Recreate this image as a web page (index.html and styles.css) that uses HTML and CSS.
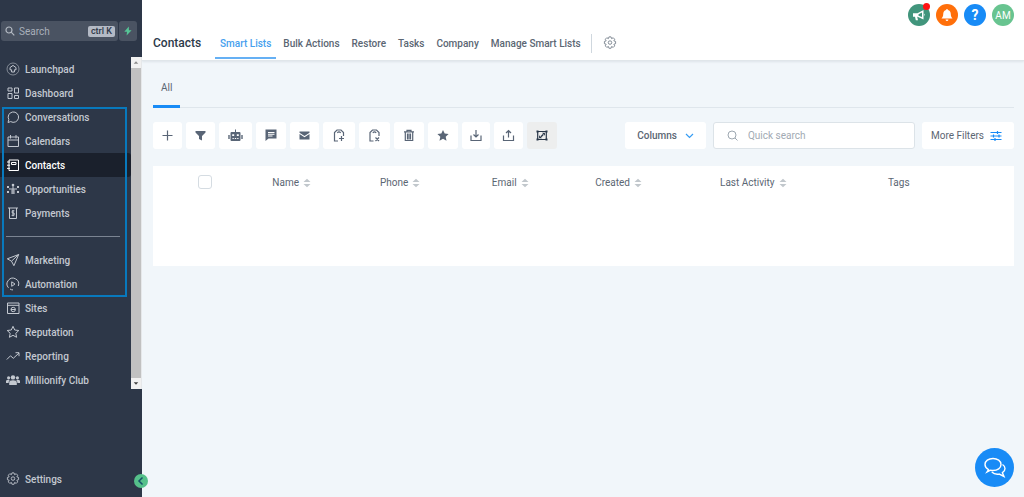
FILE: index.html
```html
<!DOCTYPE html>
<html lang="en">
<head>
<meta charset="utf-8">
<title>Contacts</title>
<meta name="viewport" content="width=device-width, initial-scale=1">
<link rel="stylesheet" href="styles.css">
</head>
<body>
<div class="app">
  <aside class="sidebar">
    <div class="finder">
      <label class="finder-box">
        <svg width="10" height="10" viewBox="0 0 10 10"><circle cx="4" cy="4" r="3"/><path d="M6.2 6.2 9.3 9.3"/></svg>
        <input type="search" placeholder="Search" aria-label="Search">
        <kbd>ctrl K</kbd>
      </label>
      <button class="bolt" aria-label="Quick actions"><svg width="8" height="10" viewBox="0 0 8 10"><path d="M4.8.6.3 5.800h2.700l-.4 3.800 5-5.400H4.900z"/></svg></button>
    </div>
    <div class="menu-area">
      <nav class="menu">
        <a href="#"><svg viewBox="0 0 14 14"><circle cx="7" cy="7" r="6" opacity=".55"/><path d="M5.6 10V7.8H4V5.6L7 3.4l3 2.2v2.2H8.4V10z"/></svg>Launchpad</a>
        <a href="#"><svg viewBox="0 0 14 14"><path d="M2 2h4v3H2zM8.500 2h4v5h-4zM2 7.500h4v5H2zM8.500 9.500h4v3h-4z"/></svg>Dashboard</a>
        <a href="#"><svg viewBox="0 0 14 14"><path d="M2 12.500 2.800 9.600A5.200 5.200 0 1 1 4.700 11.600z"/></svg>Conversations</a>
        <a href="#"><svg viewBox="0 0 14 14"><path d="M2 3h10.500v9.500H2zM2 6h10.500M4.500 1v3.500M10 1v3.500"/></svg>Calendars</a>
        <a href="#" class="current" aria-current="page"><svg viewBox="0 0 14 14"><path d="M3 2h9.500v10.500H3zM5.500 4.500h4.500v2H5.500zM1 4h3M1 7.200h3M1 10.400h3"/></svg>Contacts</a>
        <a href="#"><svg viewBox="0 0 14 14"><circle class="solid" cx="7" cy="3" r="1.300"/><path d="M7 4v8M4 7h6M6 7.500V12M8 7.500V12"/><path class="solid" d="M1 4h2v2H1zM1 9h2v2H1zM11 4h2v2h-2zM11 9h2v2h-2zM3 6.500h1v1H3zM10 6.500h1v1h-1z"/></svg>Opportunities</a>
        <a href="#"><svg viewBox="0 0 14 14"><path d="M2 2h10M3.500 2v10.500h7V2M8.400 4.800H6.200V7h1.900v2.300H5.600M7 4v6.300"/></svg>Payments</a>
        <hr>
        <a href="#"><svg viewBox="0 0 14 14"><path d="M12.700 1.500 1.300 5.800l4.200 2.400 2.400 4.500zM12.700 1.500 5.500 8.200"/></svg>Marketing</a>
        <a href="#"><svg viewBox="0 0 14 14"><path d="M2.500 10.800A5.800 5.800 0 1 1 12.300 9M4 12c1 .7 1.900.9 3 .9M5.700 4.800v4.500L9 7z"/></svg>Automation</a>
        <a href="#"><svg viewBox="0 0 14 14"><path d="M1.500 2h11.500v10.500H1.500zM1.500 4.300H13"/><circle cx="7.200" cy="8.500" r="2.200"/><path d="M5 8.500h4.400"/></svg>Sites</a>
        <a href="#"><svg viewBox="0 0 14 14"><path d="m7 1.300 1.700 3.700 4.100.5-3 2.800.8 4L7 10.300l-3.600 2 .8-4-3-2.800 4.100-.5z"/></svg>Reputation</a>
        <a href="#"><svg viewBox="0 0 14 14"><path d="m.8 10.500 3.700-3.700 2.800 2.500L13 4M9.500 3.700H13v3.500"/></svg>Reporting</a>
        <a href="#"><svg viewBox="0 0 14 14"><g class="solid"><circle cx="7" cy="4.400" r="2.200"/><circle cx="2.600" cy="4.800" r="1.600"/><circle cx="11.400" cy="4.800" r="1.600"/><path d="M3.200 12V9.300Q3.200 7.200 7 7.200t3.800 2.100V12zM0 10V7.800Q.7 6.500 3.800 6.900 2.600 7.800 2.600 10zM14 10V7.800q-.7-1.300-3.800-.9 1.200.9 1.200 3.100z"/></g></svg>Millionify Club</a>
        <div class="focus-frame"></div>
      </nav>
      <div class="scrollbar" aria-hidden="true">
        <svg viewBox="0 0 11 11"><path d="m3 7 2.500-3L8 7z"/></svg>
        <div class="thumb"></div>
        <svg class="down" viewBox="0 0 11 11"><path d="m3 4 2.500 3L8 4z"/></svg>
      </div>
    </div>
    <div class="menu settings">
      <a href="#"><svg viewBox="0 0 16 16"><path d="M6.800 1h2.400l.6 2 1.900-1 1.700 1.700-1 1.900 2 .6v2.600l-2 .6 1 1.900-1.700 1.700-1.900-1-.6 2H6.800l-.6-2-1.900 1-1.700-1.700 1-1.900-2-.6V6.200l2-.6-1-1.900L4.300 2l1.900 1z"/><circle cx="8" cy="7.500" r="2"/></svg>Settings</a>
    </div>
    <button class="collapse" aria-label="Collapse sidebar"><svg width="8" height="10" viewBox="0 0 8 10"><path d="M5.500 1.500 2 5l3.500 3.500"/></svg></button>
  </aside>

  <div class="page">
    <header class="header">
      <div class="account">
        <button class="round news" aria-label="News"><svg width="14" height="14" viewBox="0 0 14 14"><path d="M1 5.200h4.500L11.500 2v9.500L5.500 8.800h-.3l.8 3.400H3.800L3 8.800H1z"/><path class="hole" d="m6.500 6.200 3.500-1.800v4.700L6.500 7.700z"/><path d="M12 5.500q1.500 1.300 0 2.600z"/></svg><span class="alert"></span></button>
        <button class="round bell" aria-label="Notifications"><svg width="14" height="14" viewBox="0 0 14 14"><path d="M7 1q.9 0 .9 1c2 .6 2.900 2 2.900 4.200 0 2 .5 2.900 1.700 4.300H1.500c1.200-1.400 1.700-2.300 1.700-4.300C3.200 4 4.100 2.600 6.100 2q0-1 .9-1zM5.500 11.500h3q-.3 1.500-1.500 1.500t-1.500-1.500z"/></svg></button>
        <button class="round help">?</button>
        <button class="round avatar">AM</button>
      </div>
      <div class="nav-row">
        <h1>Contacts</h1>
        <nav class="tabs">
          <a href="#" class="on">Smart Lists</a>
          <a href="#">Bulk Actions</a>
          <a href="#">Restore</a>
          <a href="#">Tasks</a>
          <a href="#">Company</a>
          <a href="#">Manage Smart Lists</a>
        </nav>
        <button class="gear" aria-label="Contact settings"><svg width="14" height="14" viewBox="0 0 16 16"><path d="M6.800 1h2.400l.6 2 1.900-1 1.700 1.700-1 1.900 2 .6v2.600l-2 .6 1 1.900-1.700 1.700-1.900-1-.6 2H6.800l-.6-2-1.900 1-1.700-1.700 1-1.900-2-.6V6.200l2-.6-1-1.900L4.300 2l1.900 1z"/><circle cx="8" cy="7.500" r="2"/></svg></button>
      </div>
    </header>

    <main class="content">
      <nav class="lists"><a href="#">All</a></nav>

      <div class="toolbar">
        <button class="tool" aria-label="Add contact"><svg width="13" height="14" viewBox="0 0 13 14"><path class="line" d="M6.500 1.500v10M1.500 6.500h10"/></svg></button>
        <button class="tool" aria-label="Filter"><svg width="13" height="14" viewBox="0 0 13 14"><path d="M1.500 2h10v1.500L8 7v4.500L5 10V7L1.500 3.500z"/></svg></button>
        <button class="tool" aria-label="Automation"><svg width="17" height="14" viewBox="0 0 17 14"><path fill-rule="evenodd" d="M8 .5h1V3h3.500q1 0 1 1v7q0 1-1 1h-8q-1 0-1-1V4q0-1 1-1H8zM5.200 5.300V7h2V5.300zm4.600 0V7h2V5.300zM5.500 9v1h1.300V9zm2.300 0v1h1.400V9zm2.400 0v1h1.300V9zM1.300 6h1.400v4H1.300zm13 0h1.400v4h-1.400z"/></svg></button>
        <button class="tool" aria-label="Send message"><svg width="14" height="14" viewBox="0 0 14 14"><path fill-rule="evenodd" d="M1.500.500h11v9h-8l-3 2.500zM4 3v1h6.500V3zM4 4.800v1h6.500v-1zM4 6.600v1h4.500v-1z"/></svg></button>
        <button class="tool" aria-label="Send email"><svg width="13" height="14" viewBox="0 0 13 14"><path d="M1.500 2.500h10v1.200L6.500 7l-5-3.300zM1.500 5l5 3.200 5-3.200v5.500h-10z"/></svg></button>
        <button class="tool" aria-label="Add tag"><svg width="16" height="14" viewBox="0 0 16 14"><path class="line" d="M7 12H3.500V3.500L6 1h4l2.500 2.500V7M6.300 3.800q1.700-2 3.400 0M10.500 7v5M8 9.500h5"/></svg></button>
        <button class="tool" aria-label="Remove tag"><svg width="15" height="14" viewBox="0 0 15 14"><path class="line" d="M6.500 12H3V3.500L5.500 1h4L12 3.500V7M5.800 3.800q1.700-2 3.400 0M8.500 8.500 12 12M12 8.500 8.500 12"/></svg></button>
        <button class="tool" aria-label="Delete"><svg width="14" height="14" viewBox="0 0 14 14"><path class="line" d="M2 2.800h10M5 2.500V1.300h4v1.200M3.300 3v8.500h7.400V3M5.500 4.500v6M7 4.500v6M8.500 4.500v6"/></svg></button>
        <button class="tool" aria-label="Request review"><svg width="14" height="14" viewBox="0 0 14 14"><path d="m7 1 1.700 3.600 3.900.5-2.900 2.700.8 3.900L7 9.800l-3.500 1.900.8-3.900-2.900-2.700 3.900-.5z"/></svg></button>
        <button class="tool" aria-label="Import"><svg width="12" height="14" viewBox="0 0 12 14"><path class="line" d="M1 6.500v5h10v-5M6 1v6.800M3.500 5.500 6 8l2.500-2.500"/></svg></button>
        <button class="tool" aria-label="Export"><svg width="13" height="14" viewBox="0 0 13 14"><path class="line" d="M1.500 6.500v5h10v-5M6.500 8.500V1.700M4 4l2.500-2.500L9 4"/></svg></button>
        <button class="tool merge" aria-label="Merge"><svg width="14" height="14" viewBox="0 0 14 14"><path class="line" d="M2.700 2.500h8.600v8H2.700z"/><path d="M7 3.800h2.900v2.900zM4.100 6.300 7 9.200H4.100zM5.500 7.200l2.200-2.200 1 1-2.200 2.200zM1.500 1.500h2v2h-2zM10.500 1.500h2v2h-2zM1.500 9.500h2v2h-2zM10.500 9.500h2v2h-2z"/></svg></button>
        <div class="toolbar-end">
          <button class="columns">Columns<svg width="9" height="6" viewBox="0 0 9 6"><path d="m1 1 3.500 3.500L8 1"/></svg></button>
          <label class="quick">
            <svg width="11" height="11" viewBox="0 0 11 11"><circle cx="5" cy="5" r="4"/><path d="m8 8 2.500 2.500"/></svg>
            <input type="search" placeholder="Quick search" aria-label="Quick search">
          </label>
          <button class="more">More Filters<svg width="12" height="12" viewBox="0 0 12 12"><path d="M.5 2.500h11M.5 6h11M.5 9.500h11M7.500 1v3M9 4.500v3M3.500 4.500v3M5 8v3"/></svg></button>
        </div>
      </div>

      <div class="card">
        <table class="contacts">
          <thead>
            <tr>
              <th class="check"><input type="checkbox" aria-label="Select all contacts"></th>
              <th class="name">Name<svg viewBox="0 0 8 10"><path d="M.5 4 4 .8 7.500 4zM.5 6 4 9.200 7.500 6z"/></svg></th>
              <th class="phone">Phone<svg viewBox="0 0 8 10"><path d="M.5 4 4 .8 7.500 4zM.5 6 4 9.200 7.500 6z"/></svg></th>
              <th class="email">Email<svg viewBox="0 0 8 10"><path d="M.5 4 4 .8 7.500 4zM.5 6 4 9.200 7.500 6z"/></svg></th>
              <th class="created">Created<svg viewBox="0 0 8 10"><path d="M.5 4 4 .8 7.500 4zM.5 6 4 9.200 7.500 6z"/></svg></th>
              <th class="activity">Last Activity<svg viewBox="0 0 8 10"><path d="M.5 4 4 .8 7.500 4zM.5 6 4 9.200 7.500 6z"/></svg></th>
              <th>Tags</th>
            </tr>
          </thead>
        </table>
      </div>
    </main>
  </div>
  <button class="chat" aria-label="Open chat"><svg width="24" height="24" viewBox="0 0 24 24"><path d="M5.500 13.600C3.500 12.500 2 10.700 2 8.500 2 5 5.500 2.500 10 2.500s8 2.500 8 6-3.500 6-8 6c-.8 0-1.600-.1-2.400-.3L4 16z"/><path d="M19.500 8.500c1.500 1 2.500 2.400 2.500 4 0 1.700-1 3.200-2.600 4.200l1.600 3.800-4.800-2.400c-3.100.5-5.700-.3-7.400-2.100"/></svg></button>
</div>
</body>
</html>
```
FILE: styles.css
```css
* { box-sizing: border-box; }

body {
  margin: 0;
  font-family: Roboto, "Liberation Sans", sans-serif;
  font-size: 10px;
  color: #5b6673;
  background: #f1f6fa;
}

button, input { font: inherit; color: inherit; }
button { padding: 0; border: 0; cursor: pointer; }
a { color: inherit; text-decoration: none; }
svg { flex: none; display: block; }

.app { display: flex; min-height: 100vh; }

/* Sidebar */
.sidebar {
  position: relative;
  flex: none;
  display: flex;
  flex-direction: column;
  width: 142px;
  padding: 21px 0 6px;
  background: #2d3748;
  color: #c3c8d0;
}

.finder { display: flex; gap: 1px; padding: 0 5px 0 1px; }
.finder-box, .bolt { height: 20px; border-radius: 3px; background: #4a5362; }
.finder-box { flex: 1; display: flex; align-items: center; gap: 4px; min-width: 0; padding: 0 3px 0 4px; }
.finder-box svg { fill: none; stroke: #b4bac3; stroke-width: 1.2; }
.finder-box input { flex: 1; min-width: 0; padding: 0; border: 0; outline: 0; background: none; }
.finder-box input::placeholder { color: #a9b0ba; opacity: 1; }
kbd {
  padding: 0 3px;
  border-radius: 2px;
  background: #b4bac5;
  color: #2d3748;
  font: 500 9px/11px Roboto, sans-serif;
}
.bolt { display: grid; place-items: center; width: 18px; }
.bolt svg { fill: #56c596; }

.menu-area { display: flex; margin-top: 16px; }
.menu { position: relative; flex: 1; font-weight: 500; height: 332px; }
.menu a { display: flex; align-items: center; gap: 5px; height: 24px; padding-left: 6px; border-radius: 0 3px 3px 0; }
.menu a svg { width: 14px; height: 14px; fill: none; stroke: currentColor; stroke-width: 1; }
.menu a .solid { fill: currentColor; stroke: none; }
.menu .current { background: #1a202c; color: #fff; }
.menu hr { margin: 11px 11px 11px 6px; border: 0; border-top: 1px solid #7b8492; }
.focus-frame {
  position: absolute;
  inset: 50px 4px 92px 2px;
  border: 2px solid #0879bd;
  pointer-events: none;
}
.scrollbar { display: flex; flex-direction: column; width: 11px; background: #c1c1c1; border-right: 1px solid #e6e8ea; }
.scrollbar svg { width: 100%; height: 11px; background: #f1f1f1; fill: #8b8b8b; }
.scrollbar .down { fill: #404040; }
.thumb { flex: 1; }

.settings { flex: none; height: auto; margin-top: auto; }

.collapse {
  position: absolute;
  right: -6px;
  bottom: 9px;
  display: grid;
  place-items: center;
  width: 14px;
  height: 14px;
  border-radius: 50%;
  background: #55c08a;
}
.collapse svg { fill: none; stroke: #17506b; stroke-width: 1.5; }

/* Header */
.page { flex: 1; min-width: 0; }
.header { background: #fff; border-bottom: 1px solid #e0e6ea; box-shadow: 0 1px 2px #dde4e9; }
.account { display: flex; justify-content: flex-end; gap: 6px; padding: 4px 10px 0; }
.round {
  position: relative;
  display: grid;
  place-items: center;
  width: 22px;
  height: 22px;
  border-radius: 50%;
  color: #fff;
}
.round svg { fill: #fff; }
.news { background: #41957c; }
.news .hole { fill: #41957c; }
.bell { background: #ff6f0a; }
.help { background: #188bf6; font-size: 14px; font-weight: 700; }
.avatar { background: #68c490; }
.alert { position: absolute; top: -1px; right: 0; width: 7px; height: 7px; border-radius: 50%; background: #f11; }

.nav-row { display: flex; height: 34px; padding-left: 11px; }
h1 { margin: 0; width: 62px; color: #2d3a49; font-size: 12px; font-weight: 500; line-height: 34px; }
.tabs { display: flex; gap: 2px; font-weight: 500; white-space: nowrap; }
.tabs a { padding: 0 5px; height: 33px; line-height: 36px; }
.tabs .on { color: #469fee; border-bottom: 2px solid #65b0f4; }
.gear { align-self: center; height: 19px; margin-left: 5px; padding-left: 11px; background: none; border-left: 1px solid #cfd7de; }
.gear svg { fill: none; stroke: #737e89; }

/* Content */
.content { padding: 0 10px 0 11px; }
.lists { display: flex; height: 47px; border-bottom: 1px solid #dfe6ec; }
.lists a { height: 47px; padding: 18px 8px 0; line-height: 18px; border-bottom: 3px solid #188bf6; }

.toolbar { display: flex; gap: 4px; margin-top: 14px; }
.tool, .columns, .more { height: 27px; border-radius: 3px; background: #fff; }
.tool { padding: 0 8px; }
.tool svg { fill: #596576; }
.tool .line { fill: none; stroke: #596576; stroke-width: 1.2; }
.merge { background: #edeeee; }
.merge svg { fill: #293749; }
.merge .line { stroke: #293749; }
.toolbar-end { flex: 1; display: flex; justify-content: flex-end; gap: 7px; }
.columns { display: flex; align-items: center; gap: 8px; padding: 0 12px; font-weight: 500; }
.columns svg { fill: none; stroke: #369cf3; stroke-width: 1.2; }
.quick {
  flex: 0 1 202px;
  display: flex;
  align-items: center;
  gap: 10px;
  min-width: 0;
  height: 27px;
  padding: 0 13px;
  border: 1px solid #dce3e8;
  border-radius: 3px;
  background: #fff;
}
.quick svg { fill: none; stroke: #9da7b0; }
.quick input { flex: 1; min-width: 0; padding: 0; border: 0; outline: 0; background: none; }
.quick input::placeholder { color: #a1aab3; opacity: 1; }
.more { display: flex; align-items: center; gap: 6px; padding: 0 12px 0 9px; white-space: nowrap; }
.more svg { stroke: #188bf6; stroke-width: 1.2; }

.card { min-height: 100px; margin-top: 17px; background: #fff; }
.contacts { width: 100%; table-layout: fixed; border-collapse: collapse; }
.contacts th { height: 32px; padding: 0 0 0 16px; font-weight: 400; text-align: left; white-space: nowrap; }
.contacts th svg { display: inline-block; width: 8px; height: 10px; margin-left: 4px; vertical-align: -2px; fill: #c1c7cc; }
.contacts .check { width: 12%; padding: 0; text-align: center; }
.name { width: 12.5%; }
.phone { width: 13%; }
.email { width: 12%; }
.created { width: 14.5%; }
.activity { width: 19.5%; }
.contacts input {
  appearance: none;
  display: inline-block;
  width: 14px;
  height: 14px;
  margin: 0;
  border: 1px solid #d5dce2;
  border-radius: 3px;
  background: #fff;
  vertical-align: middle;
}

.chat {
  position: fixed;
  right: 10px;
  bottom: 10px;
  display: grid;
  place-items: center;
  width: 39px;
  height: 39px;
  border-radius: 50%;
  background: #188bf6;
}
.chat svg { fill: none; stroke: #fff; stroke-width: 1.4; }
```
